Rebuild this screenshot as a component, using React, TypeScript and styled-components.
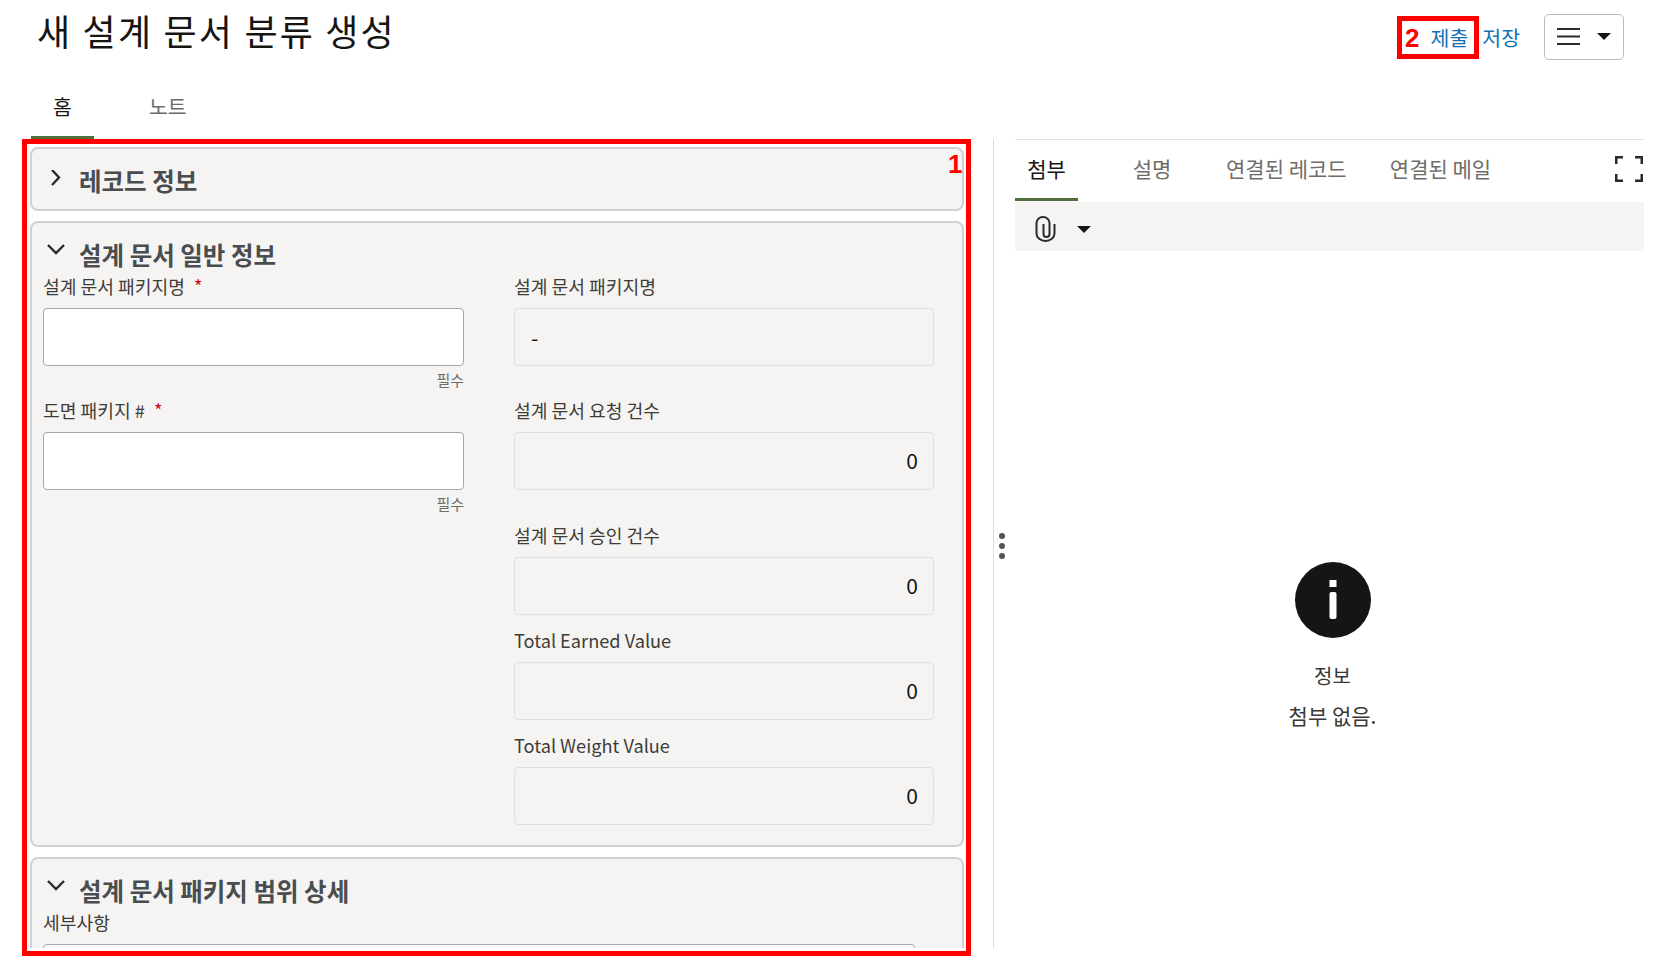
import React from "react";
import styled, { createGlobalStyle } from "styled-components";

const Global = createGlobalStyle`
  html, body { margin: 0; padding: 0; background: #fff; }
  body { font-family: "Noto Sans CJK KR", "Noto Sans", sans-serif; color: #161513; overflow: hidden; }
`;

const Page = styled.div`
  position: relative;
  width: 1664px;
  height: 967px;
  overflow: hidden;
`;

const Header = styled.header`
  display: flex;
  align-items: flex-start;
  justify-content: space-between;
  height: 96px;
  padding: 8px 40px 0 37px;
  box-sizing: border-box;
`;

const Title = styled.h1`
  margin: 0;
  font-size: 36px;
  line-height: 44px;
  font-weight: 400;
  letter-spacing: 2.2px;
`;

const Actions = styled.div`
  display: flex;
  align-items: center;
  gap: 14px;
  padding-top: 6px;
`;

const ActionLink = styled.a`
  color: #0f72b8;
  font-size: 20.5px;
  line-height: 45px;
`;

const MenuButton = styled.button`
  display: flex;
  align-items: center;
  justify-content: center;
  gap: 17px;
  width: 80px;
  height: 46px;
  margin-left: 10px;
  padding: 0 0 2px;
  background: #fff;
  border: 1.5px solid #bdbbb8;
  border-radius: 5px;
`;

const MainTabs = styled.nav`
  display: flex;
  height: 43px;
  padding-left: 31px;
`;

const MainTab = styled.div<{ $active?: boolean }>`
  width: ${(p) => (p.$active ? "63px" : "auto")};
  margin-left: ${(p) => (p.$active ? "0" : "55px")};
  text-align: center;
  font-size: 20.5px;
  line-height: 20px;
  color: ${(p) => (p.$active ? "#161513" : "#6f6c68")};
  box-sizing: border-box;
  padding-bottom: ${(p) => (p.$active ? "1px" : "0")};
  height: ${(p) => (p.$active ? "43px" : "auto")};
  border-bottom: ${(p) => (p.$active ? "3px solid #4f6e3c" : "none")};
`;

const Body = styled.div`
  display: flex;
  height: 809px;
`;

const LeftPane = styled.section`
  width: 934px;
  margin-left: 30px;
  padding-top: 8px;
  display: flex;
  flex-direction: column;
  gap: 10px;
  overflow: hidden;
`;

const Panel = styled.div<{ $h: number }>`
  flex: none;
  height: ${(p) => p.$h}px;
  box-sizing: border-box;
  background: #f5f4f2;
  border: 2px solid #d2d1cf;
  border-radius: 8px;
`;

const PanelHead = styled.div<{ $tight?: boolean }>`
  display: flex;
  align-items: center;
  height: ${(p) => (p.$tight ? "24px" : "63px")};
  margin-top: ${(p) => (p.$tight ? "19px" : "0")};
  padding-left: 15px;
  gap: 14px;
`;

const PanelTitle = styled.h2`
  margin: 0;
  font-size: 24.5px;
  font-weight: 700;
  color: #4a4d50;
`;

const Columns = styled.div`
  display: flex;
  padding: 0 0 0 11px;
  gap: 50px;
`;

const Column = styled.div<{ $w: number }>`
  width: ${(p) => p.$w}px;
  display: flex;
  flex-direction: column;
`;

const Field = styled.div<{ $gap: number }>`
  height: ${(p) => p.$gap}px;
  flex: none;
`;

const Label = styled.label`
  display: block;
  height: 42px;
  font-size: 18.2px;
  line-height: 40px;
  color: #3e3c39;
`;

const Required = styled.span`
  color: #d0021b;
  margin-left: 9px;
`;

const Input = styled.div`
  height: 58px;
  box-sizing: border-box;
  background: #fff;
  border: 1.5px solid #a8a6a2;
  border-radius: 4px;
`;

const ReadOnly = styled.div<{ $right?: boolean }>`
  display: flex;
  align-items: center;
  justify-content: ${(p) => (p.$right ? "flex-end" : "flex-start")};
  height: 58px;
  padding: 0 15px ${(p) => (p.$right ? "2px" : "0")} 16px;
  box-sizing: border-box;
  background: #f5f4f2;
  border: 1.5px solid #e0dfdd;
  border-radius: 4px;
  font-size: 21px;
`;

const Helper = styled.div`
  text-align: right;
  font-size: 15px;
  line-height: 27px;
  color: #6f6c68;
`;

const Splitter = styled.div`
  position: relative;
  width: 1px;
  margin-left: 29px;
  background: #dcdbd9;
`;

const Grip = styled.div`
  position: absolute;
  left: 6px;
  top: 394px;
  display: flex;
  flex-direction: column;
  gap: 4px;
`;

const GripDot = styled.i`
  display: block;
  width: 6px;
  height: 6px;
  border-radius: 50%;
  background: #55534f;
`;

const RightPane = styled.aside`
  width: 629px;
  margin-left: 21px;
  display: flex;
  flex-direction: column;
`;

const SideTabs = styled.div`
  display: flex;
  align-items: flex-start;
  height: 63px;
  border-top: 1.5px solid #dfe2e4;
  box-sizing: border-box;
`;

const SideTab = styled.div<{ $active?: boolean; $w: number }>`
  flex: none;
  width: ${(p) => p.$w}px;
  height: 61px;
  box-sizing: border-box;
  text-align: center;
  white-space: nowrap;
  padding-top: 14px;
  font-size: 21px;
  line-height: 28px;
  color: ${(p) => (p.$active ? "#161513" : "#6f6c68")};
  border-bottom: ${(p) => (p.$active ? "3px solid #4f6e3c" : "none")};
`;

const ExpandButton = styled.div`
  margin-left: auto;
  padding: 16px 1px 0 0;
`;

const AttachBar = styled.div`
  display: flex;
  align-items: center;
  height: 49px;
  padding: 5px 0 0 20px;
  box-sizing: border-box;
  gap: 21px;
  background: #f5f4f2;
`;

const Empty = styled.div`
  display: flex;
  flex-direction: column;
  align-items: center;
  padding: 311px 0 0 6px;
`;

const EmptyTitle = styled.div`
  margin-top: 24px;
  font-size: 20px;
  line-height: 28px;
  color: #3a3937;
`;

const EmptyText = styled.div`
  margin-top: 10px;
  font-size: 21px;
  line-height: 30px;
  color: #3a3937;
`;

const Mark = styled.div<{ $x: number; $y: number; $w: number; $h: number }>`
  position: absolute;
  left: ${(p) => p.$x}px;
  top: ${(p) => p.$y}px;
  width: ${(p) => p.$w}px;
  height: ${(p) => p.$h}px;
  box-sizing: border-box;
  border: 5px solid #f00;
  pointer-events: none;
`;

const MarkNum = styled.span<{ $x: number; $y: number }>`
  position: absolute;
  left: ${(p) => p.$x}px;
  top: ${(p) => p.$y}px;
  font-family: "Liberation Sans", sans-serif;
  font-weight: 700;
  font-size: 26px;
  line-height: 30px;
  color: #f00;
`;

const ChevronIcon = styled.svg<{ $open?: boolean }>`
  flex: none;
  margin-bottom: ${(p) => (p.$open ? "6px" : "4px")};
`;

const Chevron = ({ open }: { open?: boolean }) => (
  <ChevronIcon $open={open} width="18" height="18" viewBox="0 0 18 18" fill="none" stroke="#2b2a28" strokeWidth="2.4">
    {open ? <path d="M1 3l8 8 8-8" /> : <path d="M5 0l7 7.500-7 7.500" />}
  </ChevronIcon>
);

const Caret = () => (
  <svg width="14" height="7" viewBox="0 0 14 7"><path d="M0 0h14L7 7z" fill="#161513" /></svg>
);

export default function App() {
  return (
    <Page>
      <Global />
      <Header>
        <Title>새 설계 문서 분류 생성</Title>
        <Actions>
          <ActionLink>제출</ActionLink>
          <ActionLink>저장</ActionLink>
          <MenuButton aria-label="메뉴">
            <svg width="23" height="17" viewBox="0 0 23 17" stroke="#2b2a28" strokeWidth="2"><path d="M0 1h23M0 8.500h23M0 16h23" /></svg>
            <Caret />
          </MenuButton>
        </Actions>
      </Header>
      <MainTabs>
        <MainTab $active>홈</MainTab>
        <MainTab>노트</MainTab>
      </MainTabs>
      <Body>
        <LeftPane>
          <Panel $h={64}>
            <PanelHead>
              <Chevron />
              <PanelTitle>레코드 정보</PanelTitle>
            </PanelHead>
          </Panel>
          <Panel $h={626}>
            <PanelHead $tight>
              <Chevron open />
              <PanelTitle>설계 문서 일반 정보</PanelTitle>
            </PanelHead>
            <Columns>
              <Column $w={421}>
                <Field $gap={124}>
                  <Label>설계 문서 패키지명<Required>*</Required></Label>
                  <Input />
                  <Helper>필수</Helper>
                </Field>
                <Field $gap={124}>
                  <Label>도면 패키지 #<Required>*</Required></Label>
                  <Input />
                  <Helper>필수</Helper>
                </Field>
              </Column>
              <Column $w={420}>
                <Field $gap={124}>
                  <Label>설계 문서 패키지명</Label>
                  <ReadOnly>-</ReadOnly>
                </Field>
                <Field $gap={125}>
                  <Label>설계 문서 요청 건수</Label>
                  <ReadOnly $right>0</ReadOnly>
                </Field>
                <Field $gap={105}>
                  <Label>설계 문서 승인 건수</Label>
                  <ReadOnly $right>0</ReadOnly>
                </Field>
                <Field $gap={105}>
                  <Label>Total Earned Value</Label>
                  <ReadOnly $right>0</ReadOnly>
                </Field>
                <Field $gap={105}>
                  <Label>Total Weight Value</Label>
                  <ReadOnly $right>0</ReadOnly>
                </Field>
              </Column>
            </Columns>
          </Panel>
          <Panel $h={200}>
            <PanelHead $tight>
              <Chevron open />
              <PanelTitle>설계 문서 패키지 범위 상세</PanelTitle>
            </PanelHead>
            <Columns>
              <Column $w={872}>
                <Label>세부사항</Label>
                <Input />
              </Column>
            </Columns>
          </Panel>
        </LeftPane>
        <Splitter>
          <Grip><GripDot /><GripDot /><GripDot /></Grip>
        </Splitter>
        <RightPane>
          <SideTabs>
            <SideTab $active $w={63}>첨부</SideTab>
            <SideTab $w={148}>설명</SideTab>
            <SideTab $w={120}>연결된 레코드</SideTab>
            <SideTab $w={189}>연결된 메일</SideTab>
            <ExpandButton>
              <svg width="28" height="26" viewBox="0 0 28 26" fill="none" stroke="#2b2a28" strokeWidth="2.5">
                <path d="M1.250 8V1.250h6.750M20 1.250h6.750V8M26.750 18v6.750H20M8 24.750H1.250V18" />
              </svg>
            </ExpandButton>
          </SideTabs>
          <AttachBar>
            <svg width="21" height="26" viewBox="0 0 21 26" fill="none" stroke="#2b2a28" strokeWidth="2">
              <path d="M19.500 8v9.500a9 7.500 0 0 1-18 0V7a6.500 6 0 0 1 13 0v11a3 3 0 0 1-6 0V8" />
            </svg>
            <Caret />
          </AttachBar>
          <Empty>
            <svg width="76" height="76" viewBox="0 0 76 76">
              <circle cx="38" cy="38" r="38" fill="#161513" />
              <rect x="34.500" y="18" width="7" height="7" fill="#fff" />
              <rect x="34.500" y="30" width="7" height="27" rx="2" fill="#fff" />
            </svg>
            <EmptyTitle>정보</EmptyTitle>
            <EmptyText>첨부 없음.</EmptyText>
          </Empty>
        </RightPane>
      </Body>
      <Mark $x={22} $y={139} $w={949} $h={817} />
      <MarkNum $x={948} $y={149}>1</MarkNum>
      <Mark $x={1397} $y={16} $w={82} $h={43} />
      <MarkNum $x={1405} $y={23}>2</MarkNum>
    </Page>
  );
}
